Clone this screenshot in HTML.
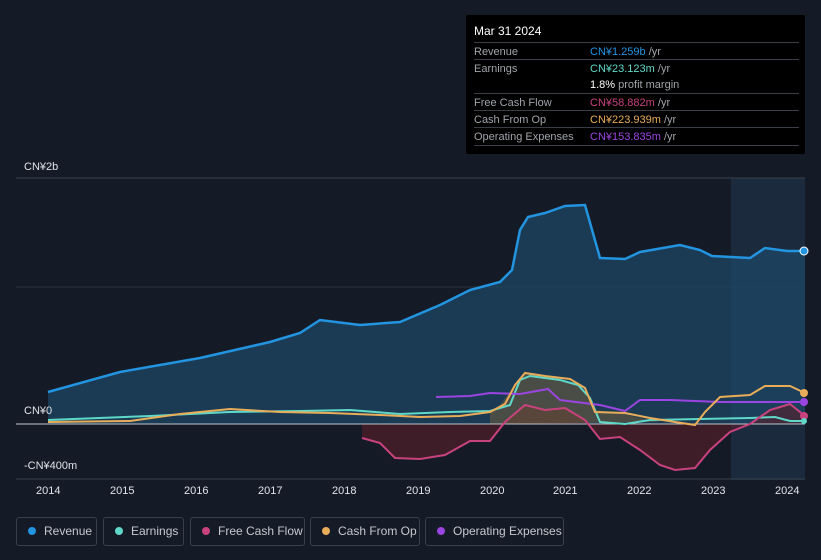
<!DOCTYPE html>
<html><head><meta charset="utf-8"><style>
body{margin:0;background:#151b26;width:821px;height:560px;overflow:hidden;font-family:"Liberation Sans",sans-serif;position:relative}
.tip{position:absolute;left:466px;top:15px;width:339px;height:139px;background:#000;border-radius:2px}
.tip .h{position:absolute;left:8px;top:9px;color:#fff;font-size:12px}
.row{position:absolute;left:8px;width:325px;border-top:1px solid #3a3f47;height:17px;font-size:11px;color:#a0a4aa}
.row span.l{position:absolute;left:0;top:3px}
.row span.v{position:absolute;left:116px;top:3px}
.leg{position:absolute;top:517px;height:29px;border:1px solid #3a404b;border-radius:3px;color:#c4c8ce;font-size:12px;box-sizing:border-box}
.leg i{position:absolute;left:11px;top:9px;width:8px;height:8px;border-radius:50%}
.leg b{font-weight:normal;position:absolute;left:27px;top:6px;white-space:nowrap}
.ax{position:absolute;color:#e0e3e8;font-size:11px}
</style></head><body>
<svg width="821" height="560" style="position:absolute;left:0;top:0">
<rect x="731" y="178" width="74" height="302" fill="#1b2a3d"/>
<line x1="16" y1="178" x2="805" y2="178" stroke="#39404b"/>
<line x1="16" y1="287" x2="805" y2="287" stroke="#2b323d"/>
<line x1="16" y1="479" x2="805" y2="479" stroke="#39404b"/>
<path d="M48,392 L120,372 L200,358 L270,342 L300,333 L320,320 L360,325 L400,322 L440,305 L470,290 L500,282 L512,270 L520,230 L528,217 L545,213 L565,206 L585,205 L600,258 L625,259 L640,252 L680,245 L700,250 L712,256 L750,258 L765,248 L787,251 L805,251 L805,424 L48,424Z" fill="#1d4766" fill-opacity="0.75"/>
<path d="M362,438 L380,443 L395,458 L420,459 L445,455 L470,441 L490,441 L505,422 L525,405 L545,410 L565,408 L585,420 L600,439 L620,437 L640,450 L660,465 L675,470 L695,468 L710,450 L730,432 L750,424 L770,410 L790,404 L805,416 L805,424 L362,424Z" fill="#5a1f2c" fill-opacity="0.6"/>
<path d="M490,412 L500,405 L515,385 L525,373 L545,378 L565,380 L580,385 L595,410 L620,413 L640,418 L660,422 L490,424Z" fill="#6b5a3a" fill-opacity="0.6"/>
<line x1="16" y1="424" x2="805" y2="424" stroke="#bfc3c9" stroke-width="1"/>
<path d="M48,392 L120,372 L200,358 L270,342 L300,333 L320,320 L360,325 L400,322 L440,305 L470,290 L500,282 L512,270 L520,230 L528,217 L545,213 L565,206 L585,205 L600,258 L625,259 L640,252 L680,245 L700,250 L712,256 L750,258 L765,248 L787,251 L805,251" fill="none" stroke="#2394e0" stroke-width="2.5"/>
<path d="M48,420 L150,416 L230,412 L300,411 L350,410 L400,414 L450,412 L490,411 L510,405 L520,380 L530,376 L560,380 L578,385 L590,398 L600,422 L625,424 L650,420 L700,419 L750,418 L775,417 L790,421 L805,421" fill="none" stroke="#5fd8c8" stroke-width="2"/>
<path d="M436,397 L470,396 L490,393 L520,394 L548,389 L560,400 L600,405 L625,411 L640,400 L670,400 L720,402 L760,402 L805,402" fill="none" stroke="#9b45e0" stroke-width="2"/>
<path d="M48,422 L130,421 L180,414 L230,409 L280,412 L330,413 L380,415 L420,417 L460,416 L490,412 L505,404 L515,385 L525,373 L545,376 L570,379 L585,388 L595,412 L625,413 L650,418 L675,422 L695,425 L705,412 L720,397 L750,395 L765,386 L790,386 L805,393" fill="none" stroke="#e9ad5a" stroke-width="2"/>
<path d="M362,438 L380,443 L395,458 L420,459 L445,455 L470,441 L490,441 L505,422 L525,405 L545,410 L565,408 L585,420 L600,439 L620,437 L640,450 L660,465 L675,470 L695,468 L710,450 L730,432 L750,424 L770,410 L790,404 L805,416" fill="none" stroke="#c8427e" stroke-width="2"/>
<circle cx="804" cy="251" r="4" fill="#2394e0" stroke="#fff" stroke-width="1"/>
<circle cx="804" cy="393" r="4" fill="#e9ad5a"/>
<circle cx="804" cy="402" r="4" fill="#9b45e0"/>
<circle cx="804" cy="416" r="4" fill="#c8427e"/>
<circle cx="804" cy="421" r="3" fill="#5fd8c8"/>
</svg>
<div class="ax" style="left:24px;top:161px">CN¥2b</div>
<div class="ax" style="left:24px;top:405px">CN¥0</div>
<div class="ax" style="left:24px;top:460px">-CN¥400m</div>
<div class="ax" style="left:36px;top:485px">2014</div><div class="ax" style="left:110px;top:485px">2015</div><div class="ax" style="left:184px;top:485px">2016</div><div class="ax" style="left:258px;top:485px">2017</div><div class="ax" style="left:332px;top:485px">2018</div><div class="ax" style="left:406px;top:485px">2019</div><div class="ax" style="left:480px;top:485px">2020</div><div class="ax" style="left:553px;top:485px">2021</div><div class="ax" style="left:627px;top:485px">2022</div><div class="ax" style="left:701px;top:485px">2023</div><div class="ax" style="left:775px;top:485px">2024</div>
<div class="tip"><div class="h">Mar 31 2024</div>
<div class="row" style="top:27px"><span class="l">Revenue</span><span class="v"><span style="color:#2394e0">CN¥1.259b</span> /yr</span></div>
<div class="row" style="top:44px"><span class="l">Earnings</span><span class="v"><span style="color:#5fd8c8">CN¥23.123m</span> /yr</span></div>
<div class="row" style="top:61px;border-top:none"><span class="v"><span style="color:#fff">1.8%</span> profit margin</span></div>
<div class="row" style="top:78px"><span class="l">Free Cash Flow</span><span class="v"><span style="color:#c8427e">CN¥58.882m</span> /yr</span></div>
<div class="row" style="top:95px"><span class="l">Cash From Op</span><span class="v"><span style="color:#e9ad5a">CN¥223.939m</span> /yr</span></div>
<div class="row" style="top:112px;border-bottom:1px solid #3a3f47"><span class="l">Operating Expenses</span><span class="v"><span style="color:#9b45e0">CN¥153.835m</span> /yr</span></div>
</div>
<div class="leg" style="left:16px;width:81px"><i style="background:#2394e0"></i><b>Revenue</b></div>
<div class="leg" style="left:103px;width:81px"><i style="background:#5fd8c8"></i><b>Earnings</b></div>
<div class="leg" style="left:190px;width:115px"><i style="background:#c8427e"></i><b>Free Cash Flow</b></div>
<div class="leg" style="left:310px;width:110px"><i style="background:#e9ad5a"></i><b>Cash From Op</b></div>
<div class="leg" style="left:425px;width:139px"><i style="background:#9b45e0"></i><b>Operating Expenses</b></div>
</body></html>
